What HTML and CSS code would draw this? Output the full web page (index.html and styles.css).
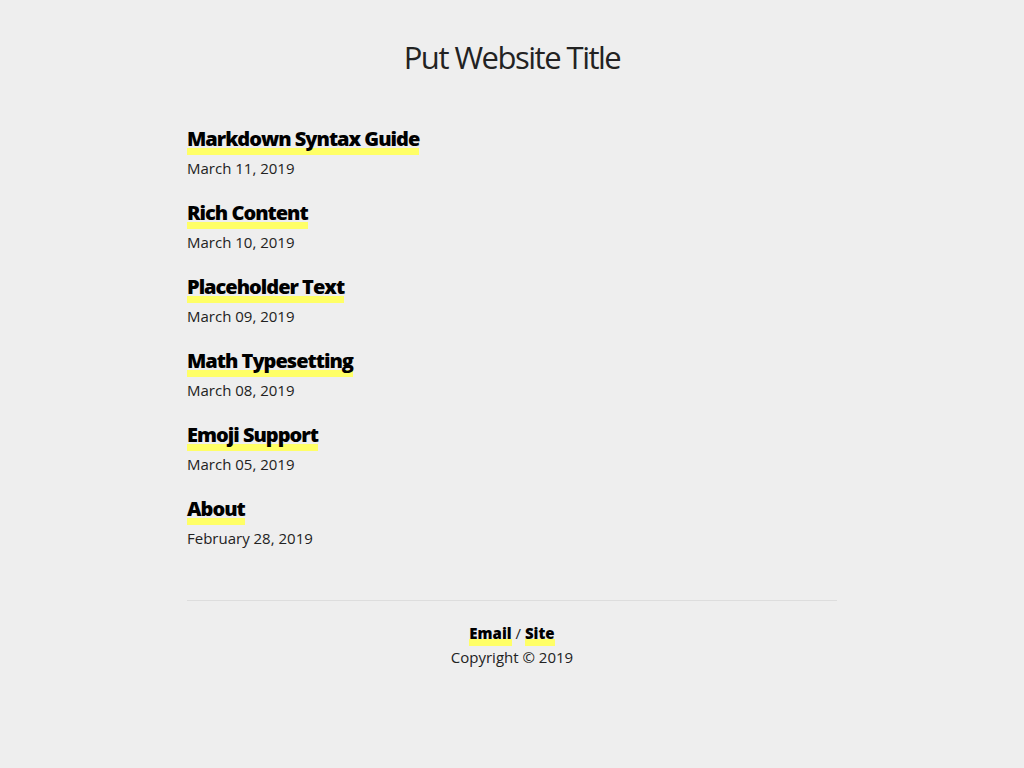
FILE: index.html
```html
<!DOCTYPE html>
<html lang="en">
<head>
<meta charset="utf-8">
<title>Put Website Title</title>
<link rel="stylesheet" href="styles.css">
</head>
<body>
<header class="site-header">
  <h1 class="site-title">Put Website Title</h1>
</header>
<main class="content">
  <ul class="post-list">
    <li class="post"><a class="post-title" href="#">Markdown Syntax Guide</a><div class="post-date">March 11, 2019</div></li>
    <li class="post"><a class="post-title" href="#">Rich Content</a><div class="post-date">March 10, 2019</div></li>
    <li class="post"><a class="post-title" href="#">Placeholder Text</a><div class="post-date">March 09, 2019</div></li>
    <li class="post"><a class="post-title" href="#">Math Typesetting</a><div class="post-date">March 08, 2019</div></li>
    <li class="post"><a class="post-title" href="#">Emoji Support</a><div class="post-date">March 05, 2019</div></li>
    <li class="post"><a class="post-title" href="#">About</a><div class="post-date">February 28, 2019</div></li>
  </ul>
</main>
<footer class="site-footer">
  <div class="footer-links"><a class="hl" href="#">Email</a> / <a class="hl" href="#">Site</a></div>
  <div class="copyright">Copyright © 2019</div>
</footer>
</body>
</html>
```
FILE: styles.css
```css
html, body {
  margin: 0;
  padding: 0;
}
body {
  background: #eeeeee;
  color: #222222;
  font-family: "Open Sans", "Liberation Sans", sans-serif;
  font-size: 15px;
}
.site-header {
  text-align: center;
  padding-top: 37px;
}
.site-title {
  margin: 0;
  font-size: 31px;
  font-weight: 400;
  letter-spacing: -1.5px;
  line-height: 40px;
  color: #222;
}
.content {
  max-width: 650px;
  margin: 0 auto;
  padding-top: 48px;
}
.post-list {
  list-style: none;
  margin: 0;
  padding: 0;
  display: flex;
  flex-direction: column;
  gap: 20px;
}
.post {
  display: flex;
  flex-direction: column;
  align-items: flex-start;
}
.post-title {
  font-size: 20px;
  font-weight: 800;
  letter-spacing: -1px;
  line-height: 27px;
  padding-bottom: 3px;
  color: #000;
  text-decoration: none;
  background: linear-gradient(#ffff66, #ffff66) left bottom / 100% 7px no-repeat;
}
.post-date {
  font-size: 15px;
  line-height: 22px;
  margin-top: 2px;
}
.site-footer {
  max-width: 650px;
  margin: 51px auto 0;
  border-top: 1px solid #dddddd;
  text-align: center;
  padding-top: 20px;
}
.footer-links {
  line-height: 24px;
}
.hl {
  font-weight: 800;
  color: #000;
  text-decoration: none;
  padding-bottom: 3px;
  background: linear-gradient(#ffff66, #ffff66) left bottom / 100% 7px no-repeat;
}
.copyright {
  line-height: 24px;
}
```
